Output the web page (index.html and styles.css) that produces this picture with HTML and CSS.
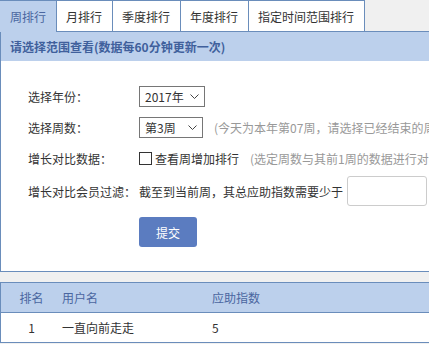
FILE: index.html
```html
<!DOCTYPE html>
<html lang="zh-CN">
<head>
    <meta charset="UTF-8">
    <meta name="viewport" content="width=device-width, initial-scale=1.0">
    <title>排行榜</title>
    <link rel="stylesheet" href="styles.css">
</head>
<body>
    <div class="page">
        <!-- 排行类型切换 -->
        <div class="tabs">
            <a class="tab active">周排行</a>
            <a class="tab">月排行</a>
            <a class="tab">季度排行</a>
            <a class="tab">年度排行</a>
            <a class="tab">指定时间范围排行</a>
        </div>

        <div class="panel">
            <div class="panel-title">请选择范围查看(数据每60分钟更新一次)</div>
            <div class="form">
                <div class="row">
                    <span class="label">选择年份：</span>
                    <span class="select year">
                        <select><option>2017年</option></select>
                        <svg viewBox="0 0 9 5" width="9" height="5"><path d="M0.5 0.5 L4.5 4.5 L8.5 0.5" fill="none" stroke="#444" stroke-width="1"/></svg>
                    </span>
                </div>
                <div class="row">
                    <span class="label">选择周数：</span>
                    <span class="select week">
                        <select><option>第3周</option></select>
                        <svg viewBox="0 0 9 5" width="9" height="5"><path d="M0.5 0.5 L4.5 4.5 L8.5 0.5" fill="none" stroke="#444" stroke-width="1"/></svg>
                    </span>
                    <span class="hint">(今天为本年第07周，请选择已经结束的周进行查询)</span>
                </div>
                <div class="row">
                    <span class="label">增长对比数据：</span>
                    <input type="checkbox" id="growth">
                    <label for="growth" class="check-text">查看周增加排行</label>
                    <span class="hint">(选定周数与其前1周的数据进行对比)</span>
                </div>
                <div class="row tall">
                    <span class="label">增长对比会员过滤：</span>
                    <span>截至到当前周，其总应助指数需要少于</span>
                    <input type="text" class="num">
                </div>
                <button class="submit">提交</button>
            </div>
        </div>

        <table class="rank">
            <thead>
                <tr><th class="c1">排名</th><th class="c2">用户名</th><th class="c3">应助指数</th></tr>
            </thead>
            <tbody>
                <tr><td class="c1">1</td><td class="c2">一直向前走走</td><td class="c3">5</td></tr>
            </tbody>
        </table>
    </div>
</body>
</html>
```

FILE: styles.css
```css
html, body {
    overflow: hidden;
}
body {
    margin: 0;
    background: #f0f0f0;
    font-family: "Noto Sans CJK SC", "Liberation Sans", sans-serif;
    font-size: 12px;
    color: #333;
}
.page {
    width: 640px;
}
.tabs {
    display: flex;
    height: 32px;
    border-bottom: 1px solid #6a8dbb;
    box-sizing: border-box;
}
.tab {
    display: flex;
    align-items: center;
    height: 32px;
    box-sizing: border-box;
    padding: 0 10px 0 9px;
    background: #fff;
    border: 1px solid #6a8dbb;
    border-left: none;
    color: #333;
}
.tab.active {
    background: #bcd0ec;
    color: #4a66a0;
    border-bottom: none;
    padding-left: 10px;
}
.panel {
    background: #fff;
    border-left: 1px solid #6a8dbb;
    border-bottom: 1px solid #6a8dbb;
}
.panel-title {
    height: 29px;
    line-height: 29px;
    padding-left: 9px;
    background: #bcd0ec;
    color: #40609c;
    font-weight: bold;
}
.form {
    padding: 25px 0 24px 27px;
}
.row {
    display: flex;
    align-items: center;
    height: 21px;
    margin-bottom: 10px;
    white-space: nowrap;
}
.row.tall {
    height: 30px;
    margin-top: -3px;
    margin-bottom: 11px;
}
.label {
    width: 111px;
    flex-shrink: 0;
}
.select {
    position: relative;
    display: inline-block;
}
.select select {
    appearance: none;
    height: 21px;
    margin: 0;
    padding: 0 0 0 5px;
    border: 1px solid #767676;
    border-radius: 0;
    background: #fff;
    font-family: inherit;
    font-size: 12px;
    color: #333;
}
.select.year select {
    width: 66px;
}
.select.week select {
    width: 64px;
}
.select svg {
    position: absolute;
    right: 6px;
    top: 8px;
}
.hint {
    margin-left: 11px;
    color: #999;
}
input[type="checkbox"] {
    appearance: none;
    width: 13px;
    height: 13px;
    margin: 0;
    border: 1px solid #333;
    background: #fff;
}
.check-text {
    margin-left: 3px;
}
.num {
    width: 80px;
    height: 30px;
    box-sizing: border-box;
    margin-left: 4px;
    border: 1px solid #ccc;
    border-radius: 3px;
}
.submit {
    margin-left: 111px;
    width: 58px;
    height: 30px;
    border: none;
    border-radius: 3px;
    background: #5b7cc0;
    color: #fff;
    font-family: inherit;
    font-size: 12px;
}
.rank {
    margin-top: 10px;
    width: 100%;
    border-collapse: collapse;
    background: #fff;
    border-left: 1px solid #6a8dbb;
}
.rank th, .rank td {
    height: 29px;
    padding: 0;
    border-top: 1px solid #6a8dbb;
    border-bottom: 1px solid #6a8dbb;
    font-weight: normal;
    text-align: left;
}
.rank th {
    background: #bcd0ec;
    color: #4a66a0;
}
.rank .c1 {
    width: 61px;
    text-align: center;
}
.rank .c2 {
    width: 150px;
}
```
